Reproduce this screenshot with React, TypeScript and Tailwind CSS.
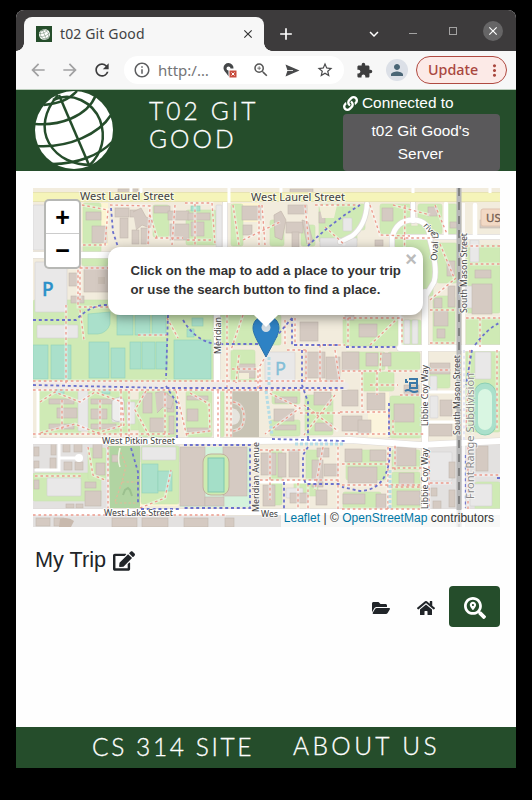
import React from "react";
import {
  MdArrowBack, MdArrowForward, MdRefresh, MdInfoOutline, MdZoomIn, MdStarBorder,
  MdExtension, MdPerson, MdMoreVert, MdClose, MdAdd, MdKeyboardArrowDown,
} from "react-icons/md";
import { FaLink, FaEdit, FaFolderOpen, FaHome, FaSearchLocation } from "react-icons/fa";

type Box = [number, number, number, number];

const grass: Box[] = [
  [33, 300, 180, 82], [83, 203, 18, 50], [153, 205, 16, 32], [82, 256, 26, 10], [213, 315, 68, 30],
  [38, 391, 43, 43], [88, 391, 42, 43], [109, 400, 40, 30], [139, 391, 37, 46], [186, 391, 26, 46],
  [231, 204, 12, 42], [270, 220, 14, 26], [301, 225, 14, 21], [186, 210, 30, 35], [319, 204, 38, 38],
  [343, 204, 22, 26], [380, 204, 31, 30], [418, 204, 24, 30], [445, 204, 12, 30], [395, 226, 38, 70],
  [466, 245, 34, 68], [466, 318, 34, 29], [437, 243, 20, 40], [433, 296, 22, 48], [343, 318, 55, 28],
  [401, 320, 20, 26], [231, 350, 24, 32], [272, 391, 28, 13], [305, 395, 28, 40], [270, 420, 30, 16],
  [362, 372, 15, 19], [378, 372, 16, 19], [345, 352, 40, 18], [388, 352, 32, 18], [390, 396, 31, 42],
  [430, 368, 20, 20], [346, 450, 40, 30], [392, 450, 28, 20], [392, 472, 28, 38], [270, 450, 12, 55], [306, 450, 12, 34],
  [343, 492, 38, 20], [466, 350, 34, 82], [33, 473, 68, 28], [88, 448, 18, 32], [141, 446, 38, 58],
  [475, 482, 25, 28], [220, 391, 4, 46], [294, 480, 24, 16],
];

const pitches: Box[] = [
  [117, 315, 16, 20], [135, 315, 15, 20], [152, 315, 14, 20], [33, 345, 15, 34], [51, 345, 20, 34],
  [89, 342, 20, 36], [111, 348, 14, 30], [130, 342, 11, 27], [142, 342, 13, 27], [156, 342, 11, 27],
  [174, 340, 37, 39], [142, 464, 16, 29], [158, 471, 14, 20], [56, 389, 8, 5], [102, 389, 8, 5],
  [191, 206, 9, 5], [192, 318, 11, 8], [187, 329, 7, 8],
];

const lots: Box[] = [
  [33, 205, 13, 45], [35, 262, 32, 50], [37, 325, 41, 13], [78, 391, 10, 40], [265, 352, 30, 31],
  [475, 352, 16, 27], [470, 240, 9, 22], [430, 396, 8, 22], [430, 452, 22, 29], [47, 478, 34, 18],
  [142, 447, 34, 13], [112, 405, 12, 17], [320, 238, 37, 9], [404, 320, 6, 24], [412, 320, 6, 24],
  [470, 484, 22, 22], [216, 205, 6, 42], [430, 376, 7, 16], [127, 402, 8, 22], [286, 488, 17, 10],
  [464, 286, 10, 22], [343, 218, 9, 13],
];

const buildings: Box[] = [
  [86, 212, 15, 8], [92, 226, 15, 17], [115, 208, 14, 9], [120, 218, 8, 20], [130, 210, 11, 7],
  [132, 230, 7, 14], [141, 228, 8, 16], [154, 206, 16, 7], [168, 211, 21, 9], [170, 224, 19, 16],
  [69, 273, 8, 13], [84, 267, 26, 25], [71, 296, 13, 7], [188, 213, 22, 7], [191, 222, 13, 14],
  [242, 206, 19, 14], [243, 225, 9, 10], [288, 205, 19, 9], [286, 222, 17, 11], [292, 232, 7, 15],
  [319, 212, 6, 11], [382, 208, 11, 13], [428, 207, 9, 9], [450, 222, 7, 6], [375, 240, 8, 6],
  [475, 270, 16, 8], [472, 284, 20, 30], [447, 261, 8, 15], [448, 286, 7, 21], [434, 298, 8, 10],
  [434, 311, 14, 15], [437, 329, 8, 9], [359, 324, 18, 13], [300, 322, 18, 19], [345, 314, 9, 6],
  [342, 352, 17, 18], [366, 353, 12, 13], [382, 353, 9, 13], [305, 352, 20, 26], [326, 357, 14, 26],
  [239, 364, 16, 14], [49, 399, 25, 5], [57, 408, 20, 10], [49, 424, 25, 5], [91, 399, 25, 5],
  [91, 409, 16, 10], [91, 424, 25, 5], [143, 393, 9, 20], [161, 393, 7, 12], [167, 403, 7, 9],
  [150, 418, 14, 14], [169, 416, 5, 18], [187, 396, 21, 4], [187, 409, 11, 12], [187, 428, 22, 4],
  [275, 397, 22, 6], [274, 409, 20, 12], [275, 425, 21, 5], [314, 392, 17, 13],
  [315, 423, 17, 8], [342, 390, 16, 16], [367, 393, 18, 17], [342, 416, 20, 15], [358, 420, 13, 13],
  [394, 404, 20, 18], [404, 385, 15, 10], [430, 363, 20, 11], [440, 400, 12, 16], [429, 424, 23, 12],
  [34, 447, 5, 9], [34, 461, 5, 7], [51, 443, 5, 12], [50, 458, 6, 12], [63, 444, 7, 8], [74, 444, 8, 8],
  [64, 462, 8, 8], [75, 462, 8, 8], [93, 444, 9, 14], [96, 463, 9, 12], [85, 482, 11, 6],
  [85, 491, 16, 15], [34, 480, 5, 9], [66, 504, 8, 4], [76, 504, 7, 4], [112, 455, 6, 7],
  [180, 447, 25, 59], [223, 447, 24, 49], [205, 497, 19, 9], [261, 453, 15, 22], [278, 453, 8, 24], [289, 450, 10, 27],
  [263, 485, 12, 21], [290, 493, 18, 10], [312, 460, 11, 27], [324, 464, 14, 12], [317, 448, 12, 9],
  [316, 490, 11, 15], [345, 449, 17, 13], [370, 450, 16, 11], [348, 467, 29, 16], [395, 447, 21, 19],
  [399, 473, 15, 13], [397, 491, 23, 14], [343, 494, 22, 10], [376, 494, 10, 14], [431, 488, 6, 8],
  [449, 462, 6, 16], [449, 490, 6, 17], [433, 501, 8, 8], [476, 446, 12, 25],
  [36, 518, 14, 8], [54, 518, 10, 8], [112, 518, 25, 9], [142, 518, 26, 9], [184, 518, 24, 9],
  [225, 518, 9, 9], [480, 220, 20, 8], [118, 189, 20, 4], [290, 189, 23, 4],
];

const redPaths = [
  "M82 205L108 210L105 245H80V205M110 205L150 206L148 245M155 238H183M150 215L157 238M175 205L172 245",
  "M69 268H78V307H110M80 266V300M66 305V385M80 310L84 340M138 335H167M167 318L178 338M80 268H108",
  "M185 203H212L215 244M187 240H212M233 205L239 245M243 240L280 222M262 205L265 245M305 205L309 245",
  "M315 205H360M325 227L345 245M370 205L380 235L410 236M393 205L430 215M405 205L404 290M395 238H435",
  "M435 205L447 234M440 244L455 280M430 300L456 278M465 246H500M470 264H500M466 318H500M480 318V347",
  "M343 318H402V345M348 318V350M370 345L398 318M430 310H455M430 343H456M295 318V345H345M320 345V382",
  "M33 381H345M33 390H340M33 434H170M40 402L55 392L80 402L95 392L122 402L124 425L97 433L75 424L40 433",
  "M62 400V430M100 400V430M121 391V437M129 391V437M146 391L135 410L150 437M165 393V437M176 391L187 437",
  "M35 476H81M88 447L93 475L105 480M108 447V510M33 515H226M140 508L165 498L171 470",
  "M190 393L209 404L210 431L185 434M231 391V437M239 355L236 383M232 369H258V391M265 391L300 408L265 434",
  "M304 405L338 431M335 395L304 435M300 413H340M306 350V382M335 350L340 382M342 371H380L381 352M388 371H420",
  "M362 372V410M377 372V395M340 412H389V432M370 385H398M400 395H428M345 434H425M393 420V434M429 370H451",
  "M260 450H305M270 450V500M260 480H340M298 483V510M308 484V510M338 447V510M323 447L315 490M342 464H388",
  "M388 447V510M342 485H423M392 468H423M390 487H420M395 470V445M342 509H420M430 483H452M429 450V510",
  "M470 350L466 430M497 350V430M468 447V510M474 475H500M259 205V245M195 204V245M218 391V437M227 315V437",
  "M243 315L231 350M272 345L260 366V391M285 320V345M287 350H306M233 402Q244 404 244 417T233 431",
];

const bluePaths = [
  "M33 320H76Q88 307 103 305H112M111 208L113 232L118 247M168 315L166 379M33 385L167 388H345",
  "M166 386L177 403V439M131 448L138 472V505M141 509H180M184 445H250V508H184M308 246Q328 225 360 205",
  "M183 320Q196 342 217 344H270L292 318M292 318V345L340 345M302 350V385L308 402V439M272 439L345 441",
  "M308 447L303 455V477L306 484H340M389 403V438M390 448Q390 490 360 491L342 487M464 350V442",
  "M475 345Q486 330 499 323M472 350L466 385M346 347H398M284 482V510M465 455V508M497 478H500",
];

const labels: { t: string; x: number; y: number; w: number; s?: number; r?: number; c?: string }[] = [
  { t: "West Laurel Street", x: 80, y: 200, w: 94, s: 11 },
  { t: "West Laurel Street", x: 251, y: 201, w: 94, s: 11 },
  { t: "West Pitkin Street", x: 102, y: 444, w: 73 },
  { t: "West Lake Street", x: 104, y: 516, w: 69 },
  { t: "Wes", x: 261, y: 517, w: 17 },
  { t: "Meridian", x: 221, y: 354, w: 37, r: -90 },
  { t: "Meridian Avenue", x: 259, y: 512, w: 70, r: -90 },
  { t: "Libbie Coy Way", x: 428, y: 426, w: 61, r: -90 },
  { t: "Libbie Coy Way", x: 428, y: 509, w: 61, r: -90 },
  { t: "South Mason Street", x: 467, y: 313, w: 80, r: -90 },
  { t: "South Mason Street", x: 460, y: 435, w: 80, r: -90 },
  { t: "Front Range Subdivision", x: 474, y: 499, w: 126, r: -90, c: "#888888", s: 11 },
];

const Rects = ({ data, fill, stroke, r = 0 }: { data: Box[]; fill: string; stroke: string; r?: number }) => (
  <g fill={fill} stroke={stroke} strokeWidth=".6">
    {data.map(([x, y, w, h], i) => <rect key={i} x={x} y={y} width={w} height={h} rx={r} />)}
  </g>
);

function CampusMap() {
  return (
    <svg className="block h-[339px] w-[467px]" viewBox="33 188 467 339" fontFamily="'Noto Sans', sans-serif">
      <rect x="33" y="188" width="467" height="339" fill="#f2ecdd" />
      <path d="M33 441H108V527H33ZM33 516H500V527H33ZM428 441H500V527H428ZM130 445H180V462H130Z" fill="#e3e1e0" />
      <path d="M82 203H108V245H82ZM232 203H259V222H232ZM140 497H178V506H140Z" fill="#fdf5d2" />
      <Rects data={grass} fill="#cfeab5" stroke="#cbe3b3" r={2} />
      <path d="M368 392H389V437H368Z" fill="#fbf4dc" />
      <path d="M108 446H140V508H110Z" fill="#b1d4a2" />
      <path d="M180 447H250V507H180Z" fill="#d4f2dc" />
      <Rects data={lots} fill="#e9e8e8" stroke="#d4d1d1" r={1} />
      <Rects data={pitches} fill="#aae0cb" stroke="#8fd1b7" />
      <path d="M88 314L110 312V324Q107 333 98 334H88Z" fill="#aae0cb" stroke="#8fd1b7" strokeWidth=".6" />
      <rect x="232" y="391" width="27" height="46" fill="#c8c3b4" />
      <Rects data={buildings} fill="#d5cac2" stroke="#c4b7ae" />
      <path d="M133 212l8-4 5 9 7 3-3 8-8-3-6 5M274 215l7-4 5 9-4 20-7-3ZM302 220l6 2 5 20-6 2ZM155 393l8-2 11 8-3 10-8-2-6 6" fill="#d5cac2" stroke="#c4b7ae" strokeWidth=".7" />
      <rect x="98" y="277" width="7" height="7" fill="#cbbfb5" />
      <path d="M232 408q8 2 8 9t-8 8Z" fill="#e6e4de" />
      <path d="M112 401q10-8 12 0v18q-6 5-12 0Z" fill="#eeeeed" stroke="#bbb" strokeWidth=".6" />
      <path d="M239 373h10v6h-10ZM319 205h18l-3 13h-12Z" fill="#f3eed9" />
      <path d="M60 519q8-3 14 2l-3 6h-12Z" fill="#c8b9ad" />
      <rect x="203" y="454" width="26" height="41" rx="8" fill="#cdebb0" stroke="#c2b09e" />
      <rect x="208" y="458" width="16" height="34" fill="#a4dfc8" stroke="#80c8ad" />
      <rect x="474" y="383" width="22" height="52" rx="11" fill="#aae0cb" stroke="#8bcfb3" />
      <rect x="478" y="389" width="14" height="41" rx="7" fill="#d9f6e2" />

      <g fill="none" stroke="#dedad7" strokeLinecap="round">
        <path d="M33 255H120M217 315V440M425 292V512M400 348H500M33 441L250 441L350 440L420 445L500 441M33 512H500" strokeWidth="7" />
        <path d="M225 203V250M405 237H500M367 204Q366 225 352 236L340 242M413 203V221" strokeWidth="6" />
        <path d="M392 247V238Q396 220 413 220T430 240Q438 270 434 282L425 297" strokeWidth="6" />
      </g>
      <g fill="none" stroke="#fff" strokeLinecap="round">
        <path d="M33 255H120M217 315V440M425 292V512M400 348H500M33 441L250 441L350 440L420 445L500 441M33 512H500" strokeWidth="6" />
        <path d="M225 203V250M405 237H500M367 204Q366 225 352 236L340 242M413 203V221M446 204V236M475 205V235" strokeWidth="4.5" />
        <path d="M392 247V238Q396 220 413 220T430 240Q438 270 434 282L425 297" strokeWidth="4.800" />
        <path d="M59 443V470H36M60 458H78M400 316V346M430 392H455M428 422H455M38 386V440M260 482H315" strokeWidth="3" />
        <path d="M33 385L345 386" strokeWidth="8" stroke="#f0eae6" />
      </g>
      <circle cx="79" cy="458" r="4" fill="#fff" />
      <path d="M33 197H500" stroke="#e2deb0" strokeWidth="10" />
      <path d="M33 197H500" stroke="#f5f4b9" strokeWidth="8.5" />
      <path d="M131 188V192M141 188V193M229 188V203M281 188V192M413 188V193M490 188V193" stroke="#fff" strokeWidth="3" />

      <g fill="none" stroke="#fff" strokeOpacity=".45" strokeWidth="3">
        {redPaths.map((d) => <path key={d} d={d} />)}
      </g>
      <g fill="none" stroke="#ec9b8d" strokeWidth="1.350" strokeDasharray="2.6 2.8">
        {redPaths.map((d) => <path key={d} d={d} />)}
      </g>
      <path d="M119 448L126 466L122 482L115 502M138 482H122M115 503H138" fill="none" stroke="#e2b99a" strokeWidth="1.2" strokeDasharray="2.5 2" />
      <path d="M120 448Q117 459 120 467" fill="none" stroke="#edf3df" strokeWidth="1.5" />
      <path d="M123 495l2-5 3-2 2 2 2 6" fill="none" stroke="#9bc08f" strokeWidth="2" />
      <g fill="none" stroke="#b5dde6" strokeWidth="3" strokeDasharray="3 2">
        <path d="M269 357V385M266 391L272 435M295 444H345M390 470V509" />
      </g>
      <g fill="none" stroke="#6b71cd" strokeWidth="1.800" strokeDasharray="3 2.8">
        {bluePaths.map((d) => <path key={d} d={d} />)}
      </g>

      <path d="M459 188V527" stroke="#b8b8b8" strokeWidth="5" />
      <path d="M459 188V527" stroke="#828282" strokeWidth="2" strokeDasharray="8 6" />
      <path d="M463.500 203V527" stroke="#fff" strokeWidth="3" strokeOpacity=".8" />

      <g fill="#2b90c9" fontSize="19">
        <text x="42" y="296" fontWeight="500" stroke="#2b90c9" strokeWidth=".4">P</text>
        <text x="43" y="231">P</text>
        <text x="275" y="375" fontSize="18" fill="#83bed7" stroke="#83bed7" strokeWidth=".4">P</text>
      </g>
      <path d="M406 379v3h2M409 379h8v9h-7v-5h6M405 391q3-2 6 0t7 0" fill="none" stroke="#3c79a7" strokeWidth="2" />

      <g fill="#454545" stroke="#fff" strokeWidth="1.800" strokeOpacity=".7" paintOrder="stroke">
        {labels.map((l) => (
          <text key={l.t + l.x + l.y} x={l.x} y={l.y} fontSize={l.s ?? 9} fill={l.c ?? "#3f3f3f"}
            textLength={l.w} lengthAdjust="spacingAndGlyphs" transform={l.r ? `rotate(${l.r} ${l.x} ${l.y})` : undefined}>
            {l.t}
          </text>
        ))}
        <text x="437" y="261" fontSize="9" textLength="29" lengthAdjust="spacingAndGlyphs" transform="rotate(-87 437 261)">Oval D</text>
        <text x="423" y="226" fontSize="8.500" transform="rotate(48 423 226)">rive</text>
        <text x="395" y="252" fontSize="9" transform="rotate(-90 395 252)">e</text>
      </g>
      <rect x="481" y="209" width="25" height="17" rx="2" fill="#f2d9c5" stroke="#dfc3b0" />
      <text x="486" y="222" fontSize="11.500" fill="#755e52" stroke="#755e52" strokeWidth=".3">US</text>
    </svg>
  );
}

function Globe({ className }: { className: string }) {
  return (
    <svg className={className} viewBox="0 0 78 78">
      <circle cx="39" cy="39" r="39" fill="#fff" />
      <g fill="none" stroke="#254d2b" strokeWidth="2.500">
        <path d="M24 4L54 74" />
        <path d="M23 4C9 20 6 38 14 52C23 68 40 74 56 74" />
        <path d="M18 9C38 0 58 12 65 29C71 46 68 61 54 75" />
        <path d="M0 33C24 35 52 26 61 4" />
        <path d="M2 55C34 57 64 43 76 24" />
        <path d="M18 73C40 73 64 65 77 51" />
        <path d="M9 14C22 13 34 9 42 0" />
      </g>
    </svg>
  );
}

function BrowserChrome() {
  return (
    <div className="font-['Noto_Sans',sans-serif]">
      <div className="flex h-[41px] rounded-t-[8px] bg-[#3d3b3c] pl-2">
        <div className="relative mt-[7px] flex h-[34px] w-[240px] items-center rounded-t-[8px] bg-[#f7f7f7] pl-3 pr-[9px]">
          <span className="absolute -left-2 bottom-0 size-2 bg-[radial-gradient(circle_at_0_0,#3d3b3c_7.500px,#f7f7f7_8px)]" />
          <span className="absolute -right-2 bottom-0 size-2 bg-[radial-gradient(circle_at_100%_0,#3d3b3c_7.500px,#f7f7f7_8px)]" />
          <div className="flex size-4 items-center justify-center bg-[#254d2b]"><Globe className="size-[11px]" /></div>
          <span className="ml-2 whitespace-nowrap text-[14px] leading-5 tracking-[0.14px] text-[#424243]">t02 Git Good</span>
          <MdClose className="ml-auto size-[14px] text-[#333]" />
        </div>
        <div className="flex flex-1 items-center pt-[6px]">
          <MdAdd className="ml-[12px] size-[20px] text-white" />
          <MdKeyboardArrowDown className="ml-[69px] size-[18px] text-white" />
          <span className="ml-[26px] h-px w-2 bg-[#a3a2a2]" />
          <span className="-mt-[6px] ml-8 size-2 border border-[#a3a2a2]" />
          <span className="-mt-[5px] ml-[26px] flex size-5 items-center justify-center rounded-full bg-[#666566]">
            <MdClose className="size-[14px] text-white" />
          </span>
        </div>
      </div>
      <div className="flex h-[39px] items-center border-b border-[#b8cbb9] bg-[#f7f7f7] pl-[12px] text-[#3d3d3e]">
        <MdArrowBack className="size-[20px] text-[#a1a1a2]" />
        <MdArrowForward className="ml-[12px] size-[20px] text-[#a1a1a2]" />
        <MdRefresh className="ml-[12px] size-[20px]" />
        <div className="ml-[12px] flex h-7 w-[220px] items-center rounded-full bg-white pl-[9px]">
          <MdInfoOutline className="size-[18px] shrink-0 text-[#5d5e60]" />
          <span className="ml-[7px] w-[54px] text-[15px] leading-5 text-[#747577]">http:/…</span>
          <svg className="ml-[10px] size-[16px] shrink-0" viewBox="0 0 16 16">
            <path d="M6.500 1A5 5 0 0 0 1.500 6C1.500 9 4.500 10.500 6.500 14.500V8.500A2 2 0 1 1 8.500 6.500H11.500A5 5 0 0 0 6.500 1Z" fill="#454749" />
            <path d="M7.500 8.500h7v7h-7Z" fill="#c84c3e" /><path d="m9.500 10.500 3 3m0-3-3 3" stroke="#fff" />
          </svg>
          <MdZoomIn className="ml-[14px] size-[18px] shrink-0 text-[#555]" />
          <svg className="ml-[15px] size-[15px] shrink-0" viewBox="0 0 15 15"><path d="M.5 1.500 14.500 7.500.5 13.500 2.500 7.500Z" fill="#48494b" /><path d="M2 7.500h6" stroke="#fff" strokeWidth=".8" /></svg>
          <MdStarBorder className="ml-[16px] size-[18px] shrink-0 text-[#48494b]" />
        </div>
        <MdExtension className="ml-[12px] size-[17px]" />
        <span className="ml-[13px] flex size-[22px] items-center justify-center rounded-full bg-[#dce0e7]">
          <MdPerson className="size-[18px] text-[#496575]" />
        </span>
        <div className="ml-[8px] flex h-7 w-[91px] items-center rounded-full border border-[#b04a41] bg-[#fceae7] pl-[11px] text-[#a9473e]">
          <span className="w-[57px] text-[14.300px] font-medium leading-5">Update</span>
          <MdMoreVert className="size-[19px]" />
        </div>
      </div>
    </div>
  );
}

export default function App() {
  return (
    <main className="h-[800px] w-[532px] bg-black px-4 pt-[10px] font-['Liberation_Sans',Arial,sans-serif]">
      <div className="flex h-[758px] flex-col rounded-t-[8px] bg-[#fefefe]">
        <BrowserChrome />
        <header className="flex h-[81px] shrink-0 bg-[#254d2b] text-white">
          <Globe className="ml-[19px] mt-px size-[78px] shrink-0" />
          <h1 className="ml-[36px] mt-[7px] w-[149px] font-['Lato',sans-serif] text-[24.500px] font-light leading-[28px] tracking-[3.100px] [-webkit-text-stroke:0.300px_#fff]">T02 GIT GOOD</h1>
          <div className="ml-[45px] w-[157px] text-[15.400px]">
            <div className="flex h-6 items-center gap-[4px] pt-[2px]"><FaLink className="size-[15px]" /><span>Connected to</span></div>
            <button className="h-[57px] w-[157px] rounded-[4px] bg-[#5a595b] pl-6 pr-[26px] pb-[2px] leading-[23px]">t02 Git Good's Server</button>
          </div>
        </header>

        <section className="relative ml-[17px] mt-[17px] h-[339px] w-[467px] shrink-0 overflow-hidden">
          <CampusMap />
          <div className="absolute left-[11px] top-[11px] w-[37px] overflow-hidden rounded-[5px] border-2 border-[#999a96]/70 bg-white text-center text-[25px] font-bold text-black">
            <div className="flex h-[33px] items-center justify-center border-b border-[#ccc] pt-px">+</div>
            <div className="flex h-[33px] items-center justify-center">−</div>
          </div>
          <svg className="absolute left-[219px] top-[127px] h-[43px] w-7" viewBox="0 0 28 43">
            <path d="M14 1C6 1 1 6 1 13c0 6 4 12 13 29 9-17 13-23 13-29C27 6 22 1 14 1Z" fill="#2e82c4" stroke="#2a72ab" />
            <circle cx="14" cy="12.500" r="4.500" fill="#d3dde4" />
          </svg>
          <div className="absolute left-[75px] top-[59px] h-[68px] w-[315px] rounded-[12px] bg-white pl-[22.500px] pt-[14px] text-[13.200px] font-bold leading-[19px] text-[#333] shadow-[0_3px_12px_rgba(0,0,0,0.4)]">
            <p className="whitespace-nowrap">Click on the map to add a place to your trip<br />or use the search button to find a place.</p>
            <span className="absolute right-[6px] top-[3px] text-[20px] text-[#bbb]">×</span>
          </div>
          <svg className="absolute left-[221px] top-[127px] h-3 w-6" viewBox="0 0 24 12"><path d="M0 0H24L12 12Z" fill="#fff" /></svg>
          <div className="absolute bottom-0 right-0 h-[17px] whitespace-nowrap bg-white/75 pl-[3px] pr-[6px] text-[12px] leading-[16px] tracking-[0.040px] text-[#333]">
            <span className="text-[#0078a8]">Leaflet</span> | © <span className="text-[#0078a8]">OpenStreetMap</span> contributors
          </div>
        </section>

        <div className="ml-[19px] mt-[19px] flex h-7 items-center gap-[7px] text-[#212529]">
          <h2 className="text-[21.700px]">My Trip</h2><FaEdit className="mt-[2px] size-[22px]" />
        </div>
        <div className="mr-4 mt-[12px] flex h-[41px] items-center justify-end text-[#212529]">
          <FaFolderOpen className="mt-[3px] size-[18px]" />
          <FaHome className="ml-[27px] mt-[3px] size-[18px]" />
          <button className="ml-[14px] flex h-[41px] w-[51px] items-center justify-center rounded-[4px] bg-[#254d2b] pt-[2px] text-white">
            <FaSearchLocation className="size-[22px]" />
          </button>
        </div>
        <footer className="mt-auto flex h-[41px] shrink-0 bg-[#254d2b] pl-[76px] font-['Lato',sans-serif] text-[24.500px] font-light leading-[37px] text-white [-webkit-text-stroke:0.300px_#fff]">
          <span className="w-[201px] pt-px tracking-[2.600px]">CS 314 SITE</span><span className="tracking-[3.400px]">ABOUT US</span>
        </footer>
      </div>
    </main>
  );
}
